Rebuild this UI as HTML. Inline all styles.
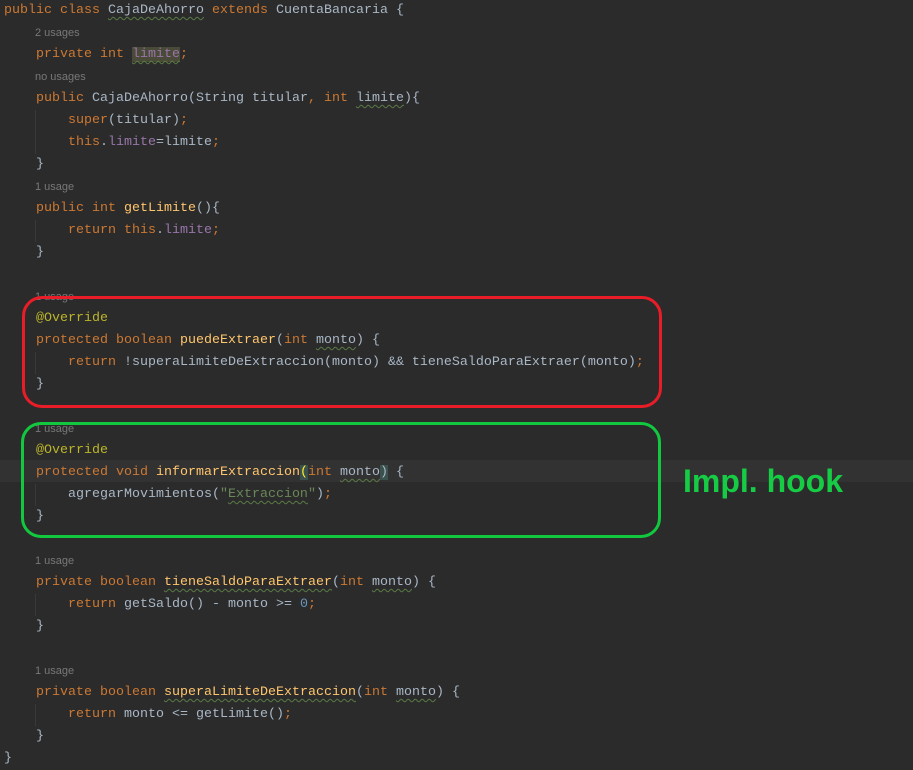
<!DOCTYPE html>
<html><head><meta charset="utf-8"><style>
body{margin:0;width:913px;height:767px;background:#2b2b2b;overflow:hidden;position:relative;font-family:"Liberation Mono",monospace;font-size:13.33px;color:#a9b7c6}
#c{position:absolute;left:0;top:2px;width:913px;height:767px}
.l{position:absolute;left:4px;height:22px;line-height:22px;white-space:pre}
.h{position:absolute;left:35px;font-family:"Liberation Sans",sans-serif;font-size:11px;color:#787878;line-height:22px;height:22px}
.k{color:#cc7832}.f{color:#9876aa}.m{color:#ffc66d}.a{color:#bbb529}.s{color:#6a8759}.n{color:#6897bb}
.w{text-decoration:underline wavy #5b7a45;text-decoration-thickness:1px;text-underline-offset:3px}
.box{position:absolute;border-radius:20px;box-sizing:border-box}
.g{position:absolute;width:1px;background:#393939}
</style></head><body>
<div style="position:absolute;left:0;top:460px;width:913px;height:22px;background:#323232"></div>
<div id="c">
<div class="g" style="left:35px;top:108px;height:44px"></div>
<div class="g" style="left:35px;top:218px;height:22px"></div>
<div class="g" style="left:35px;top:350px;height:22px"></div>
<div class="g" style="left:35px;top:482px;height:22px"></div>
<div class="g" style="left:35px;top:592px;height:22px"></div>
<div class="g" style="left:35px;top:702px;height:22px"></div>
<div class="l" style="top:-2px"><span class="k">public class </span><span class="w">CajaDeAhorro</span> <span class="k">extends </span>CuentaBancaria {</div>
<div class="h" style="top:20px">2 usages</div>
<div class="l" style="top:42px">    <span class="k">private int </span><span class="f w" style="background:#4a4a38">limite</span><span class="k">;</span></div>
<div class="h" style="top:64px">no usages</div>
<div class="l" style="top:86px">    <span class="k">public </span>CajaDeAhorro(String titular<span class="k">, int </span><span class="w">limite</span>){</div>
<div class="l" style="top:108px">        <span class="k">super</span>(titular)<span class="k">;</span></div>
<div class="l" style="top:130px">        <span class="k">this</span>.<span class="f">limite</span>=limite<span class="k">;</span></div>
<div class="l" style="top:152px">    }</div>
<div class="h" style="top:174px">1 usage</div>
<div class="l" style="top:196px">    <span class="k">public int </span><span class="m">getLimite</span>(){</div>
<div class="l" style="top:218px">        <span class="k">return this</span>.<span class="f">limite</span><span class="k">;</span></div>
<div class="l" style="top:240px">    }</div>
<div class="h" style="top:284px">1 usage</div>
<div class="l" style="top:306px">    <span class="a">@Override</span></div>
<div class="l" style="top:328px">    <span class="k">protected boolean </span><span class="m">puedeExtraer</span>(<span class="k">int </span><span class="w">monto</span>) {</div>
<div class="l" style="top:350px">        <span class="k">return </span>!superaLimiteDeExtraccion(monto) &amp;&amp; tieneSaldoParaExtraer(monto)<span class="k">;</span></div>
<div class="l" style="top:372px">    }</div>
<div class="h" style="top:416px">1 usage</div>
<div class="l" style="top:438px">    <span class="a">@Override</span></div>
<div class="l" style="top:460px">    <span class="k">protected void </span><span class="m">informarExtraccion</span><span style="color:#ffef28;background:#3b514d">(</span><span class="k">int </span><span class="w">monto</span><span style="background:#3b514d">)</span> {</div>
<div class="l" style="top:482px">        agregarMovimientos(<span class="s">"<span class="w">Extraccion</span>"</span>)<span class="k">;</span></div>
<div class="l" style="top:504px">    }</div>
<div class="h" style="top:548px">1 usage</div>
<div class="l" style="top:570px">    <span class="k">private boolean </span><span class="m w">tieneSaldoParaExtraer</span>(<span class="k">int </span><span class="w">monto</span>) {</div>
<div class="l" style="top:592px">        <span class="k">return </span>getSaldo() - monto &gt;= <span class="n">0</span><span class="k">;</span></div>
<div class="l" style="top:614px">    }</div>
<div class="h" style="top:658px">1 usage</div>
<div class="l" style="top:680px">    <span class="k">private boolean </span><span class="m w">superaLimiteDeExtraccion</span>(<span class="k">int </span><span class="w">monto</span>) {</div>
<div class="l" style="top:702px">        <span class="k">return </span>monto &lt;= getLimite()<span class="k">;</span></div>
<div class="l" style="top:724px">    }</div>
<div class="l" style="top:746px">}</div>
</div>
<div class="box" style="left:22px;top:296px;width:640px;height:112px;border:3px solid #e91d27"></div>
<div class="box" style="left:21px;top:422px;width:640px;height:116px;border:3px solid #12c83e"></div>
<div style="position:absolute;left:683px;top:462px;font-family:'Liberation Sans',sans-serif;font-weight:bold;font-size:32px;line-height:38px;color:#16cc44">Impl. hook</div>
</body></html>
